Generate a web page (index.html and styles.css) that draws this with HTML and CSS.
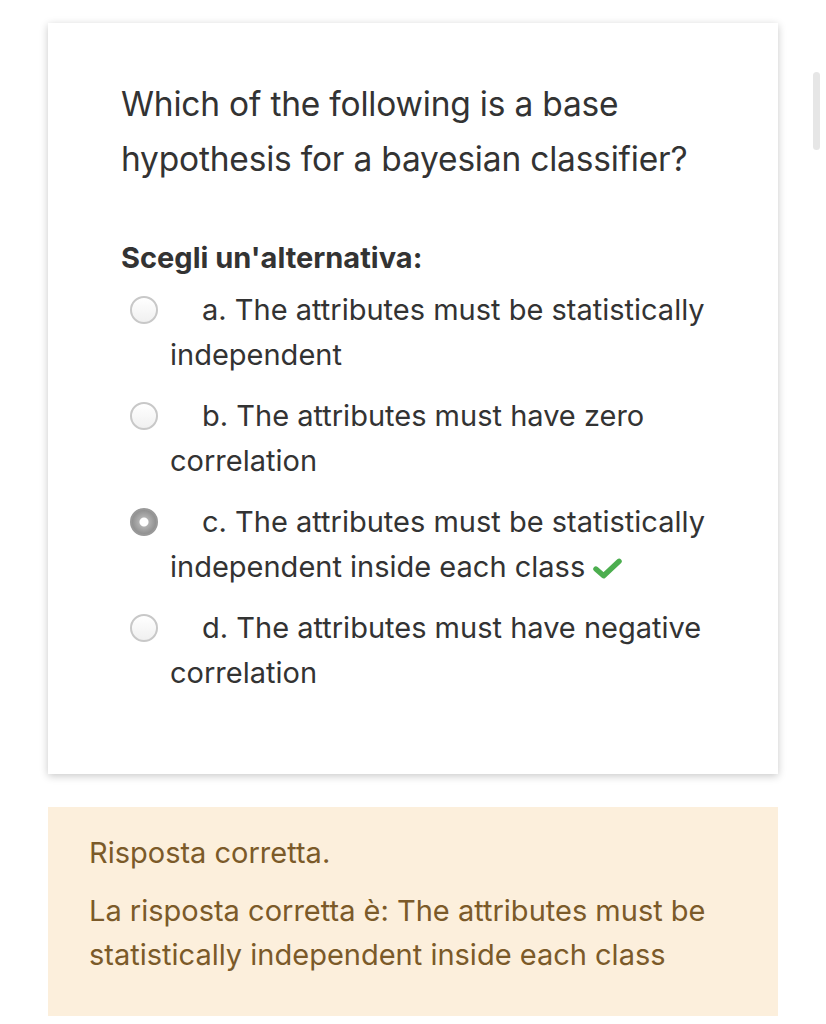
FILE: index.html
```html
<!DOCTYPE html>
<html>
<head>
<meta charset="utf-8">
<link rel="stylesheet" href="styles.css">
</head>
<body>
<div class="page">
  <div class="card">
    <h1 class="question">Which of the following is a base hypothesis for a bayesian classifier?</h1>
    <div class="prompt">Scegli un'alternativa:</div>
    <div class="answers">
      <div class="opt"><span class="radio"></span>a. The attributes must be statistically independent</div>
      <div class="opt"><span class="radio"></span>b. The attributes must have zero correlation</div>
      <div class="opt"><span class="radio checked"></span>c. The attributes must be statistically independent inside each class <svg class="tick" viewBox="0 0 30 22" width="29" height="22"><path d="M3 12 L11 19 L27 4" fill="none" stroke="#4cae4f" stroke-width="5.5" stroke-linecap="round" stroke-linejoin="round"/></svg></div>
      <div class="opt"><span class="radio"></span>d. The attributes must have negative correlation</div>
    </div>
  </div>
  <div class="feedback">
    <p class="fb1">Risposta corretta.</p>
    <p class="fb2">La risposta corretta è: The attributes must be statistically independent inside each class</p>
  </div>
  <div class="scrollbar"></div>
</div>
</body>
</html>
```
FILE: styles.css
```css
html, body {
  margin: 0;
  padding: 0;
  background: #fff;
}
body {
  font-family: Inter, "Noto Sans", sans-serif;
  color: #333;
  width: 826px;
  height: 1024px;
  overflow: hidden;
}
.page {
  position: relative;
  padding: 23px 0 0 48px;
}
.card {
  width: 730px;
  height: 751px;
  box-sizing: border-box;
  background: #fff;
  box-shadow: 0 2px 8px rgba(0,0,0,0.22);
  padding: 54px 40px 0 73px;
}
.question {
  margin: 0;
  font-weight: 400;
  font-size: 33.5px;
  line-height: 55px;
  color: #333;
  letter-spacing: -0.2px;
}
.prompt {
  margin-top: 51px;
  font-weight: 700;
  font-size: 29px;
  line-height: 40px;
  color: #333;
}
.answers {
  margin-top: 9px;
}
.opt {
  padding-left: 49px;
  font-size: 29px;
  line-height: 45px;
  margin-bottom: 16px;
  color: #333;
}
.radio {
  display: inline-block;
  box-sizing: border-box;
  width: 28px;
  height: 28px;
  border-radius: 50%;
  border: 2px solid #c8c8c8;
  background: linear-gradient(#fff, #f0f0f0);
  margin-left: -40px;
  margin-right: 44px;
  vertical-align: -4px;
}
.radio.checked {
  border: 2px solid #999;
  background: radial-gradient(circle, #fff 0 4px, #b0b0b0 5px, #8c8c8c 13px);
}
.tick {
  vertical-align: -2px;
}
.feedback {
  margin-top: 33px;
  width: 730px;
  height: 209px;
  box-sizing: border-box;
  background: #fcefdc;
  padding: 24px 30px 0 41px;
  color: #7b5a29;
  font-size: 29px;
}
.feedback p {
  margin: 0;
  line-height: 44px;
}
.fb2 {
  margin-top: 14px !important;
}
.scrollbar {
  position: absolute;
  left: 813px;
  top: 72px;
  width: 7px;
  height: 78px;
  border-radius: 4px;
  background: #e6e6e6;
}
```
